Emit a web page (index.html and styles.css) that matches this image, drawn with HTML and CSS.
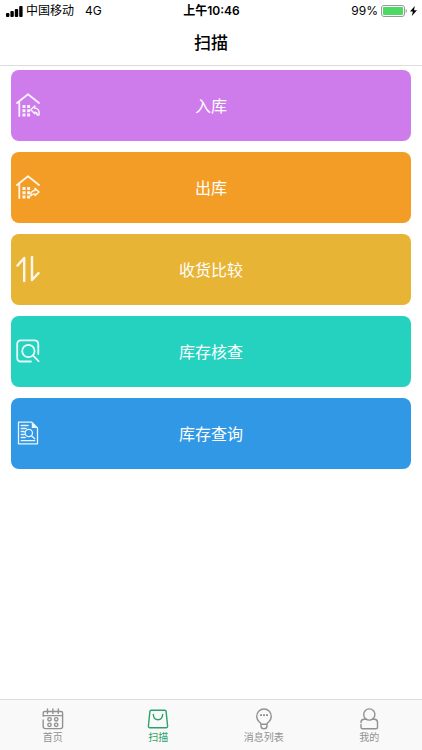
FILE: index.html
```html
<!DOCTYPE html>
<html lang="zh-CN">
<head>
<meta charset="utf-8">
<meta name="viewport" content="width=device-width, initial-scale=1">
<title>扫描</title>
<link rel="stylesheet" href="styles.css">
</head>
<body>
<header class="top">
  <div class="status">
    <div class="status-side">
      <svg class="signal" viewBox="0 0 17 11" aria-hidden="true"><rect x="0" y="7" width="3.4" height="4" rx="1"/><rect x="4.400" y="5" width="3.400" height="6" rx="1"/><rect x="8.800" y="3" width="3.400" height="8" rx="1"/><rect x="13.200" y="0" width="3.400" height="11" rx="1"/></svg>
      <span>中国移动</span>
      <span class="network">4G</span>
    </div>
    <time class="clock">上午10:46</time>
    <div class="status-side status-end">
      <span>99%</span>
      <svg class="battery" viewBox="0 0 26 12" aria-hidden="true"><rect x=".5" y=".5" width="23" height="11" rx="2.5" fill="#fff" stroke="#999"/><rect x="2" y="2" width="20" height="8" rx="1" fill="#4cd964"/><path d="M24.7 4v4q1.2-.7 1.2-2t-1.2-2z" fill="#999"/></svg>
      <svg class="bolt" viewBox="0 0 7 10" aria-hidden="true"><path d="M4.8 0 0 5.6h2.9L1.8 10 7 4.2H4z"/></svg>
    </div>
  </div>
  <h1 class="title">扫描</h1>
</header>

<main class="actions">
  <button class="action inbound" type="button">
    <svg class="action-icon" viewBox="0 0 24 24" aria-hidden="true"><path d="M1 10 12 1.2 23 10M3.3 8.5V23"/><path class="solid" d="M6.5 12h3v3h-3zm4.600 0h3v3h-3zM6.500 16.200h3v3h-3zm4.600 0h3v3h-3zM6.500 20.400h3v3h-3zm4.600 0h3v3h-3z"/><path class="thin" d="m14.800 16.800 4-3.800v2.200c3.400 0 4.700 2.300 4.200 6.800h-1.800c0-2-.7-2.700-2.400-2.700v1.500z"/></svg>
    <span>入库</span>
  </button>
  <button class="action outbound" type="button">
    <svg class="action-icon" viewBox="0 0 24 24" aria-hidden="true"><path d="M1 10 12 1.2 23 10M3.3 8.5V23"/><path class="solid" d="M6.5 12h3v3h-3zm4.600 0h3v3h-3zM6.500 16.200h3v3h-3zm4.600 0h3v3h-3zM6.500 20.400h3v3h-3zm4.600 0h3v3h-3z"/><path class="thin" d="m23 17-4-3.600v2.200c-3 0-4.500 1.900-4.200 5.200 1.200-1.300 2.300-1.700 4.200-1.700v1.500z"/></svg>
    <span>出库</span>
  </button>
  <button class="action compare" type="button">
    <svg class="action-icon bold" viewBox="0 0 24 24" aria-hidden="true"><path d="M1.500 8.500 8.200 1V24M16 0v23l6.500-6.800"/></svg>
    <span>收货比较</span>
  </button>
  <button class="action check" type="button">
    <svg class="action-icon" viewBox="0 0 24 24" aria-hidden="true"><path d="M15 22.500H5Q1.200 22.500 1.200 18.700V5.200Q1.200 1.400 5 1.400H18.500Q22.300 1.400 22.300 5.200V15"/><circle cx="12.400" cy="12" r="6.200"/><path d="m16.800 16.400 5.800 5.800"/></svg>
    <span>库存核查</span>
  </button>
  <button class="action query" type="button">
    <svg class="action-icon fine" viewBox="0 0 24 24" aria-hidden="true"><path d="M15.800 1.200H2.500v21.600h19V7z"/><path class="solid" d="M15.800 1v6h5.900z"/><path d="M5.200 4.500h7M5.200 7.500h5M5.200 10.500h3M5.200 13.500h3M5.200 16.500h4M5.200 19.700h13.500"/><circle cx="12.800" cy="12" r="3.700"/><path d="m15.500 14.700 3.200 3.100"/></svg>
    <span>库存查询</span>
  </button>
</main>

<nav class="tabs">
  <a class="tab" href="#home">
    <svg class="tab-icon" viewBox="0 0 22 22" aria-hidden="true"><path d="M1.200 8.200V5Q1.200 3.500 2.700 3.500H19Q20.600 3.500 20.600 5V18.500Q20.600 20.600 18.500 20.600H3.300Q1.200 20.600 1.200 18.500V12M1.200 7.600H20.500M5.500 1v4.500M10.900 1v4.500M16.300 1v4.500"/><circle cx="7.500" cy="11.300" r="1.700"/><circle cx="14.200" cy="11.300" r="1.700"/><circle cx="7.500" cy="16.800" r="1.700"/><circle cx="14.200" cy="16.800" r="1.700"/></svg>
    <span>首页</span>
  </a>
  <a class="tab current" href="#scan" aria-current="page">
    <svg class="tab-icon" viewBox="0 0 22 22" aria-hidden="true"><path d="M4.200 2.200H17.800Q19 2.200 19.100 3.400L20.600 18Q20.700 19.800 19 19.800H3Q1.300 19.800 1.400 18L2.900 3.400Q3 2.200 4.200 2.200z"/><path d="M6.300 6.500C7 13.500 15 13.500 15.700 6.500"/></svg>
    <span>扫描</span>
  </a>
  <a class="tab" href="#messages">
    <svg class="tab-icon" viewBox="0 0 22 22" aria-hidden="true"><path d="M8 16.200Q8 14.900 6.200 13.800A7.300 7.300 0 1 1 15.800 13.800Q14 14.900 14 16.200zM8 16.200V18Q8 20.800 11 20.800T14 18V16.200"/><path class="dots" d="M7 7.200h2M10 7.200h2M13 7.200h2"/></svg>
    <span>消息列表</span>
  </a>
  <a class="tab" href="#mine">
    <svg class="tab-icon" viewBox="0 0 22 22" aria-hidden="true"><circle cx="11.300" cy="6.500" r="5.600"/><path d="M8 11.300H6Q3 11.500 3 14.500M3 16.500V19.200Q3 20.700 4.500 20.700H18Q19.500 20.700 19.500 19.200V14.500Q19.500 11.500 16.500 11.300H14.500"/></svg>
    <span>我的</span>
  </a>
</nav>
</body>
</html>
```

FILE: styles.css
```css
* {
  box-sizing: border-box;
}

body {
  display: flex;
  flex-direction: column;
  min-height: 100vh;
  margin: 0;
  background: #fff;
  color: #000;
  font-family: Inter, "Noto Sans CJK SC", sans-serif;
}

.top {
  border-bottom: 1px solid #dcdcdc;
}

.status {
  display: flex;
  align-items: center;
  height: 22px;
  padding: 0 5px 0 6px;
  font-size: 12px;
  line-height: 22px;
}

.status-side {
  display: flex;
  flex: 1;
  align-items: center;
  gap: 3px;
}

.status-end {
  justify-content: flex-end;
}

.network {
  margin-left: 8px;
}

.clock {
  font-weight: 600;
}

.signal {
  width: 17px;
  height: 11px;
}

.battery {
  width: 26px;
  height: 12px;
}

.bolt {
  width: 7px;
  height: 10px;
}

.title {
  margin: 0;
  font-size: 17px;
  font-weight: 500;
  line-height: 43px;
  text-align: center;
}

.actions {
  display: flex;
  flex: 1;
  flex-direction: column;
  gap: 11px;
  padding: 4px 11px;
}

.action {
  display: grid;
  grid-template-columns: 24px 1fr 24px;
  align-items: center;
  height: 71px;
  padding: 0 5px 2px;
  border: 0;
  border-radius: 8px;
  color: #fff;
  font: inherit;
  font-size: 16px;
}

.inbound {
  background: #ce7bec;
}

.outbound {
  background: #f39d26;
}

.compare {
  background: #e8b435;
}

.check {
  background: #25d2bf;
}

.query {
  background: #3198e6;
}

.action-icon,
.tab-icon {
  fill: none;
  stroke: currentColor;
  stroke-linecap: round;
  stroke-linejoin: round;
}

.action-icon {
  width: 24px;
  height: 24px;
  overflow: visible;
  stroke-width: 1.8;
  opacity: 0.9;
}

.action-icon.bold {
  stroke-width: 2.4;
}

.action-icon.fine {
  stroke-width: 1.3;
}

.thin {
  stroke-width: 1.5;
}

.solid {
  fill: currentColor;
  stroke: none;
}

.tabs {
  display: flex;
  border-top: 1px solid #dcdcdc;
  background: #f9f9f9;
}

.tab {
  display: flex;
  flex: 1;
  flex-direction: column;
  align-items: center;
  padding: 8px 0 5px;
  color: #929292;
  font-size: 10px;
  line-height: 15px;
  text-decoration: none;
}

.current {
  color: #2ba26a;
}

.tab-icon {
  width: 22px;
  height: 22px;
  stroke-width: 1.4;
}

.tab-icon .dots {
  stroke-linecap: butt;
  stroke-width: 1.8;
}
```
